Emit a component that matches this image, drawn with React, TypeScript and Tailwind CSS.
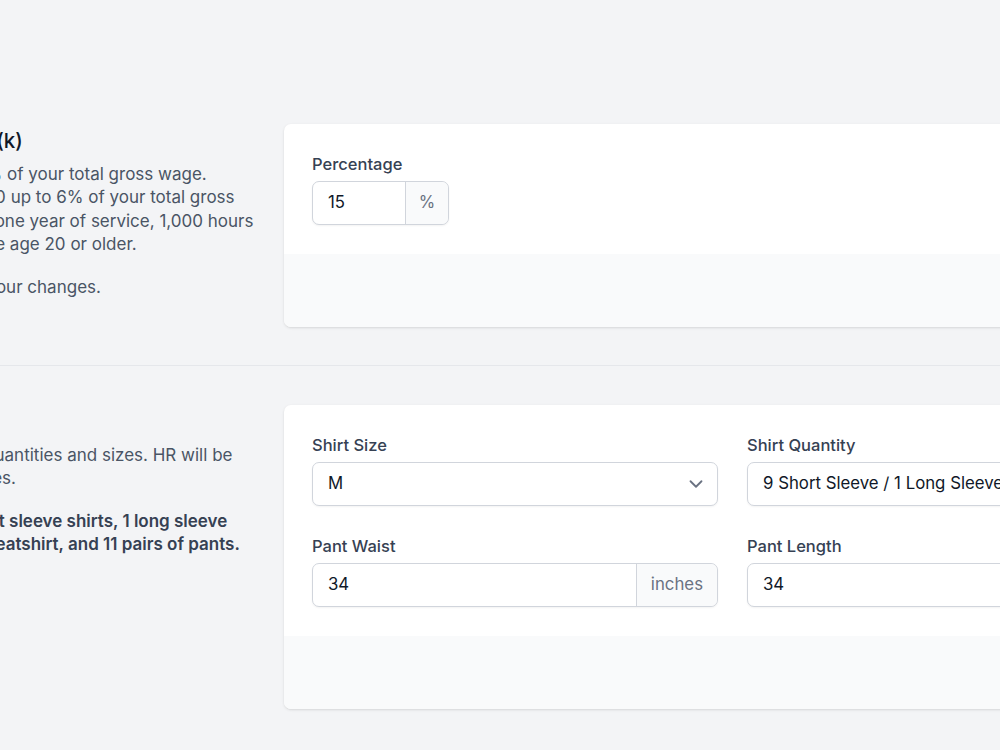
import React from 'react';
import { ChevronDown } from 'lucide-react';

// Field label used above every control
const Label: React.FC<{ children: React.ReactNode }> = ({ children }) => (
  <label className="block text-[16.5px] leading-[24px] font-medium text-gray-700">{children}</label>
);

const AddonInput: React.FC<{ value: string; addon: string; className?: string; addonClass?: string }> = ({
  value,
  addon,
  className,
  addonClass,
}) => (
  <div
    className={`mt-[5px] flex h-[44px] rounded-[7px] border border-gray-300 bg-white shadow-[0_1px_2px_rgba(0,0,0,0.05)] ${className ?? ''}`}
  >
    <input
      defaultValue={value}
      className="w-full min-w-0 flex-1 rounded-l-[7px] bg-transparent pl-[15px] text-[16.8px] text-gray-900 outline-none"
    />
    <span
      className={`flex items-center justify-center rounded-r-[7px] border-l border-gray-300 bg-gray-50 text-[16.8px] text-gray-500 ${addonClass ?? 'px-[14px]'}`}
    >
      {addon}
    </span>
  </div>
);

const SelectBox: React.FC<{ value: string }> = ({ value }) => (
  <div className="mt-[5px] flex h-[44px] items-center justify-between rounded-[7px] border border-gray-300 bg-white pl-[15px] pr-[10px] shadow-[0_1px_2px_rgba(0,0,0,0.05)]">
    <span className="whitespace-nowrap text-[16.8px] text-gray-900">{value}</span>
    <ChevronDown size={22} strokeWidth={2} className="shrink-0 text-gray-500" />
  </div>
);

const Card: React.FC<{ children: React.ReactNode }> = ({ children }) => (
  <div className="overflow-hidden rounded-[7px] bg-white shadow-[0_1px_3px_rgba(0,0,0,0.1),0_1px_2px_-1px_rgba(0,0,0,0.1)]">
    <div className="px-[28px] pb-[29px] pt-[28px]">{children}</div>
    <div className="h-[73px] bg-gray-50" />
  </div>
);

const Line: React.FC<{ children: React.ReactNode }> = ({ children }) => (
  <span className="block whitespace-nowrap">{children}</span>
);

export default function App() {
  return (
    <div className="min-h-screen overflow-hidden bg-gray-100 font-['Inter',sans-serif]">
      <div className="ml-[-178px] w-[1359px] pt-[124px]">
        {/* 401(k) section */}
        <div className="grid grid-cols-[435px_897px] gap-x-[27px]">
          <div className="pt-[1px]">
            <h3 className="text-[20.5px] leading-[32px] font-medium text-gray-900">Contribute To 401(k)</h3>
            <p className="mt-[6px] text-[17px] leading-[23.4px] text-gray-600">
              <Line>Contribute up to 100% of your total gross wage.</Line>
              <Line>Company puts in $1.50 up to 6% of your total gross</Line>
              <Line>wage, on completing one year of service, 1,000 hours</Line>
              <Line>worked a year, and are age 20 or older.</Line>
            </p>
            <p className="mt-[19px] text-[17px] leading-[23.4px] text-gray-600">Contact HR to make your changes.</p>
          </div>
          <Card>
            <Label>Percentage</Label>
            <AddonInput value="15" addon="%" className="w-[137px]" addonClass="w-[43px]" />
          </Card>
        </div>

        <div className="pb-[39px] pt-[38px]">
          <div className="border-t border-gray-200" />
        </div>

        {/* Uniform section */}
        <div className="grid grid-cols-[435px_897px] gap-x-[27px]">
          <div className="pt-[1px]">
            <h3 className="text-[20.5px] leading-[32px] font-medium text-gray-900">Uniforms</h3>
            <p className="mt-[6px] text-[17px] leading-[23.4px] text-gray-600">
              <Line>Select your uniform quantities and sizes. HR will be</Line>
              <Line>notified of any changes.</Line>
            </p>
            <p className="mt-[19px] text-[17px] leading-[23.4px] font-semibold text-gray-700">
              <Line>You are issued 9 short sleeve shirts, 1 long sleeve</Line>
              <Line>shirts, 2 jackets, 1 sweatshirt, and 11 pairs of pants.</Line>
            </p>
          </div>
          <Card>
            <div className="grid grid-cols-2 gap-x-[29px] gap-y-[28px]">
              <div>
                <Label>Shirt Size</Label>
                <SelectBox value="M" />
              </div>
              <div>
                <Label>Shirt Quantity</Label>
                <SelectBox value="9 Short Sleeve / 1 Long Sleeve" />
              </div>
              <div>
                <Label>Pant Waist</Label>
                <AddonInput value="34" addon="inches" />
              </div>
              <div>
                <Label>Pant Length</Label>
                <AddonInput value="34" addon="inches" />
              </div>
            </div>
          </Card>
        </div>
      </div>
    </div>
  );
}
